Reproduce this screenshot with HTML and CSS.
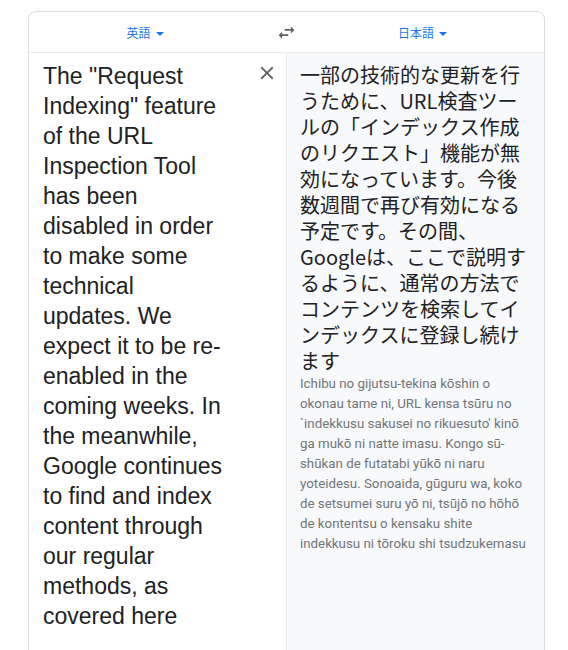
FILE: index.html
```html
<!DOCTYPE html>
<html lang="ja">
<head>
<meta charset="utf-8">
<title>翻訳</title>
<link rel="stylesheet" href="styles.css">
</head>
<body>
<div class="card">
  <div class="header">
    <div class="lang lang-src"><span class="lang-name">英語</span><span class="caret"></span></div>
    <div class="swap">
      <svg viewBox="0 0 24 24" width="21" height="21"><path d="M6.99 11L3 15l3.99 4v-3H14v-2H6.99v-3zM21 9l-3.99-4v3H10v2h7.01v3L21 9z" fill="#5f6368"/></svg>
    </div>
    <div class="lang lang-tgt"><span class="lang-name">日本語</span><span class="caret"></span></div>
  </div>
  <div class="panels">
    <div class="panel panel-src">
      <div class="src-text">The "Request Indexing" feature of the URL Inspection Tool has been disabled in order to make some technical updates. We expect it to be re-enabled in the coming weeks. In the meanwhile, Google continues to find and index content through our regular methods, as covered here</div>
      <svg class="close" viewBox="0 0 24 24" width="22" height="22"><path d="M19 6.41L17.59 5 12 10.590 6.41 5 5 6.41 10.59 12 5 17.59 6.41 19 12 13.41 17.59 19 19 17.59 13.41 12z" fill="#5f6368"/></svg>
    </div>
    <div class="panel panel-tgt">
      <div class="tgt-text">
        <span class="line">一部の技術的な更新を行</span>
        <span class="line">うために、URL検査ツー</span>
        <span class="line">ルの「インデックス作成</span>
        <span class="line">のリクエスト」機能が無</span>
        <span class="line">効になっています。今後</span>
        <span class="line">数週間で再び有効になる</span>
        <span class="line">予定です。その間、</span>
        <span class="line">Googleは、ここで説明す</span>
        <span class="line">るように、通常の方法で</span>
        <span class="line">コンテンツを検索してイ</span>
        <span class="line">ンデックスに登録し続け</span>
        <span class="line">ます</span>
      </div>
      <div class="translit">
        <span class="line">Ichibu no gijutsu-tekina kōshin o</span>
        <span class="line">okonau tame ni, URL kensa tsūru no</span>
        <span class="line">`indekkusu sakusei no rikuesuto' kinō</span>
        <span class="line">ga mukō ni natte imasu. Kongo sū-</span>
        <span class="line">shūkan de futatabi yūkō ni naru</span>
        <span class="line">yoteidesu. Sonoaida, gūguru wa, koko</span>
        <span class="line">de setsumei suru yō ni, tsūjō no hōhō</span>
        <span class="line">de kontentsu o kensaku shite</span>
        <span class="line">indekkusu ni tōroku shi tsudzukemasu</span>
      </div>
    </div>
  </div>
</div>
</body>
</html>
```
FILE: styles.css
```css
html, body {
  margin: 0;
  padding: 0;
  background: #ffffff;
}
body {
  overflow: hidden;
  height: 650px;
}
.card {
  margin: 11px 0 0 28px;
  width: 517px;
  box-sizing: border-box;
  border: 1px solid #dadce0;
  border-radius: 8px;
  overflow: hidden;
}
.header {
  display: grid;
  grid-template-columns: 232px 50px 233px;
  height: 40px;
  border-bottom: 1px solid #e8eaed;
  align-items: center;
}
.lang {
  display: flex;
  justify-content: center;
  align-items: center;
  color: #1a73e8;
  font-family: "Noto Sans CJK JP", "Noto Sans", sans-serif;
  font-size: 12px;
}
.lang-tgt {
  padding-right: 10px;
}
.caret {
  width: 0;
  height: 0;
  margin-left: 5px;
  margin-top: 3px;
  border-left: 4px solid transparent;
  border-right: 4px solid transparent;
  border-top: 4px solid #1a73e8;
}
.swap {
  display: flex;
  justify-content: center;
  align-items: center;
}
.swap svg {
  display: block;
}
.panels {
  display: grid;
  grid-template-columns: 257px 257px;
  column-gap: 1px;
  background: #e8eaed;
  min-height: 620px;
}
.panel {
  background: #ffffff;
}
.panel-src {
  display: flex;
  justify-content: space-between;
  align-items: flex-start;
  padding: 8px 8px 0 14px;
}
.src-text {
  width: 182px;
  font-family: "Liberation Sans", Arial, sans-serif;
  font-size: 23px;
  line-height: 30px;
  color: #202124;
}
.close {
  display: block;
  margin-top: 1px;
}
.panel-tgt {
  background: #f8f9fa;
  padding: 9px 8px 0 13px;
}
.line {
  display: block;
  white-space: nowrap;
}
.tgt-text {
  font-family: "Noto Sans CJK JP", "Noto Sans", sans-serif;
  font-size: 20px;
  line-height: 26px;
  color: #202124;
}
.translit {
  font-family: Roboto, "Liberation Sans", sans-serif;
  font-size: 13.3px;
  line-height: 20px;
  color: #70757a;
}
```
